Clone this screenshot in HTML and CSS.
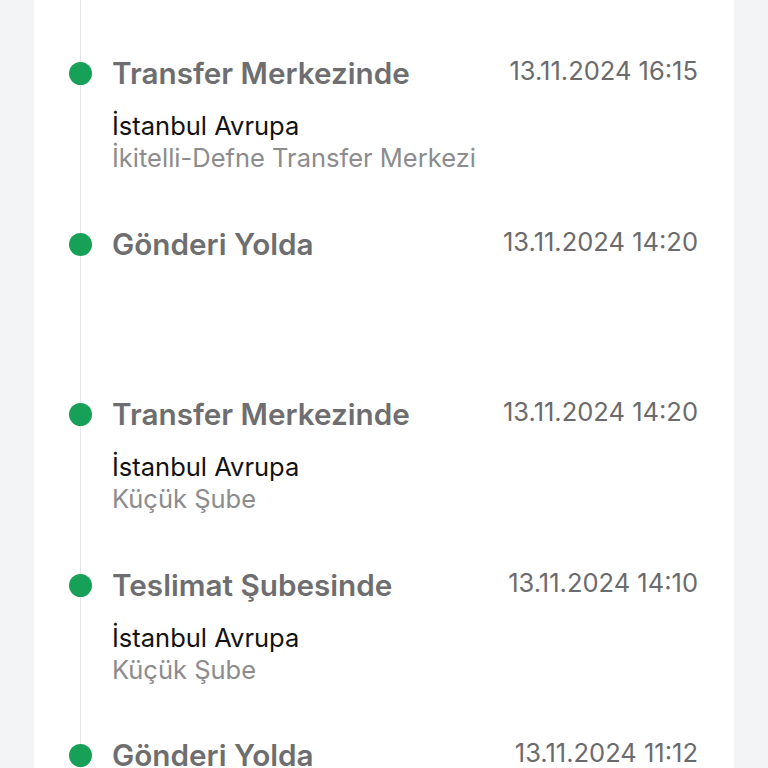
FILE: index.html
```
<!doctype html>
<html lang="tr">
<head>
  <meta charset="utf-8">
  <title>Gönderi Takibi</title>
  <link rel="stylesheet" href="styles.css">
</head>
<body>
  <div class="card">
    <ul class="timeline">
      <li class="event">
        <span class="dot"></span>
        <div class="event-head">
          <span class="title">Transfer Merkezinde</span>
          <span class="date">13.11.2024 16:15</span>
        </div>
        <div class="place">İstanbul Avrupa</div>
        <div class="branch">İkitelli-Defne Transfer Merkezi</div>
      </li>
      <li class="event">
        <span class="dot"></span>
        <div class="event-head">
          <span class="title">Gönderi Yolda</span>
          <span class="date">13.11.2024 14:20</span>
        </div>
      </li>
      <li class="event">
        <span class="dot"></span>
        <div class="event-head">
          <span class="title">Transfer Merkezinde</span>
          <span class="date">13.11.2024 14:20</span>
        </div>
        <div class="place">İstanbul Avrupa</div>
        <div class="branch">Küçük Şube</div>
      </li>
      <li class="event">
        <span class="dot"></span>
        <div class="event-head">
          <span class="title">Teslimat Şubesinde</span>
          <span class="date">13.11.2024 14:10</span>
        </div>
        <div class="place">İstanbul Avrupa</div>
        <div class="branch">Küçük Şube</div>
      </li>
      <li class="event">
        <span class="dot"></span>
        <div class="event-head">
          <span class="title">Gönderi Yolda</span>
          <span class="date">13.11.2024 11:12</span>
        </div>
      </li>
    </ul>
  </div>
</body>
</html>
```

FILE: styles.css
```
body { margin: 0; background: #f3f4f6; font-family: Inter, "Noto Sans", sans-serif; }
.card { margin: 0 34px; height: 768px; overflow: hidden; background: #fff; padding-right: 36px; }
.timeline { list-style: none; margin: 0 0 0 46px; padding: 57px 0 40px 31px; border-left: 1px solid #e3e5e8; }
.event { position: relative; height: 170.5px; }
.dot { position: absolute; left: -43px; top: 5px; width: 23px; height: 23px; border-radius: 50%; background: #17a057; }
.event-head { display: flex; justify-content: space-between; align-items: flex-start; margin-bottom: 21px; }
.title { font-size: 29.7px; line-height: 32px; font-weight: 600; color: #6e6e70; }
.date { font-size: 25.5px; line-height: 28px; color: #6b6b6d; }
.place { font-size: 25.5px; line-height: 32px; color: #121212; }
.branch { font-size: 25.5px; line-height: 32px; color: #8c8c8e; }
```
